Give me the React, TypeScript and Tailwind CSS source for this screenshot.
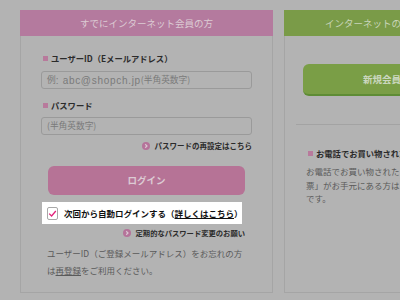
const ArrowDot = () => (
  <svg width="8" height="8" viewBox="0 0 8 8" className="shrink-0">
    <circle cx="4" cy="4" r="4" fill="#b5739a" />
    <polyline points="3.2,2.3 5,4 3.2,5.7" fill="none" stroke="#d9c6d0" strokeWidth="1.2" />
  </svg>
);

const Bullet = () => <span className="w-[5px] h-[5px] bg-[#b87a9c] shrink-0" />;

const latin = { fontFamily: '"Liberation Sans", Arial, sans-serif' };

export default function App() {
  return (
    <div
      className="w-[400px] h-[300px] overflow-hidden bg-[#b3b3b3] flex gap-[11px] pl-[20px] pt-[10px]"
      style={{ fontFamily: '"Noto Sans CJK JP", "Noto Sans", sans-serif' }}
    >
      {/* Login card */}
      <div className="w-[253px] shrink-0 flex flex-col h-[283px]">
        <div className="h-[26px] bg-[#b47a9e] flex items-center justify-center text-[9.5px] text-[#dccbd4]">
          すでにインターネット会員の方
        </div>
        <div className="flex-1 border-x border-b border-[#a5a5a5] px-[20px] flex flex-col">
          <div className="mt-[16px] h-[12px] flex items-center gap-[3px] pl-[2px]">
            <Bullet />
            <span className="text-[8.3px] font-bold text-[#2b2b2b]">ユーザーID（Eメールアドレス）</span>
          </div>
          <div className="mt-[7px] h-[18px] border border-[#9a9a9a] rounded-[3px] flex items-center pl-[5px] text-[8.7px] text-[#7a7a7a] whitespace-nowrap">
            例<span className="text-[10px] tracking-[0.7px]" style={latin}>: abc@shopch.jp</span>(半角英数字)
          </div>
          <div className="mt-[10px] h-[12px] flex items-center gap-[3px] pl-[2px]">
            <Bullet />
            <span className="text-[8.3px] font-bold text-[#2b2b2b]">パスワード</span>
          </div>
          <div className="mt-[6px] h-[18px] border border-[#9a9a9a] rounded-[3px] flex items-center pl-[5px] text-[8.7px] text-[#7a7a7a]">
            (半角英数字)
          </div>
          <div className="mt-[5px] h-[12px] flex items-center justify-end gap-[5px]">
            <ArrowDot />
            <span className="text-[7.5px] font-bold text-[#2b2b2b]">パスワードの再設定はこちら</span>
          </div>
          <div className="mt-[14px] mx-[7px] h-[29px] rounded-[6px] bg-[#b67396] flex items-center justify-center text-[9.5px] font-bold text-[#dccbd4]">
            ログイン
          </div>
          <div className="relative z-10 mt-[7px] ml-[1px] w-[200px] h-[22px] bg-white flex items-center pl-[5px] gap-[6px]">
            <span className="w-[13px] h-[13px] border border-[#a8a8a8] rounded-[2px] bg-white flex items-center justify-center">
              <svg width="9" height="9" viewBox="0 0 9 9">
                <polyline points="1.2,4.6 3.6,7 7.8,2" fill="none" stroke="#e2217a" strokeWidth="1.3" />
              </svg>
            </span>
            <span className="text-[8.5px] font-bold text-[#111] whitespace-nowrap">
              次回から自動ログインする（<span className="underline">詳しくはこちら</span>）
            </span>
          </div>
          <div className="mt-[3px] h-[12px] flex items-center justify-end gap-[5px] pr-[7px]">
            <ArrowDot />
            <span className="text-[7.3px] font-bold text-[#2b2b2b]">定期的なパスワード変更のお願い</span>
          </div>
          <p className="mt-[6px] pl-[6px] text-[8.5px] leading-[17px] text-[#5a5a5a] whitespace-nowrap">
            ユーザーID（ご登録メールアドレス）をお忘れの方
            <br />
            は<span className="underline">再登録</span>をご利用ください。
          </p>
        </div>
      </div>

      {/* Register card */}
      <div className="w-[253px] shrink-0 flex flex-col h-[283px]">
        <div className="h-[26px] bg-[#7a9b48] flex items-center justify-center text-[9.5px] text-[#c9d5b9] whitespace-nowrap">
          インターネットのお買い物が初めての方
        </div>
        <div className="flex-1 border-x border-b border-[#a5a5a5] flex flex-col">
          <div className="mt-[28px] mx-[18px] h-[32px] rounded-[6px] bg-[#7a9e46] border-b-2 border-[#5e8c35] flex items-center justify-center text-[9.5px] font-bold text-[#cbd7bf] whitespace-nowrap">
            新規会員登録はこちら
          </div>
          <div className="mt-[28px] mx-[11px] border-t border-[#a3a3a3]" />
          <div className="mt-[22px] h-[12px] flex items-center gap-[3px] pl-[23px]">
            <Bullet />
            <span className="text-[8.3px] font-bold text-[#2b2b2b] whitespace-nowrap">お電話でお買い物されたお客様</span>
          </div>
          <p className="mt-[6px] pl-[21px] text-[8.5px] leading-[13.5px] text-[#5a5a5a] whitespace-nowrap">
            お電話でお買い物されたことがあり「お届け伝
            <br />
            票」がお手元にある方はこちらから会員登録が可能
            <br />
            です。
          </p>
        </div>
      </div>
    </div>
  );
}
